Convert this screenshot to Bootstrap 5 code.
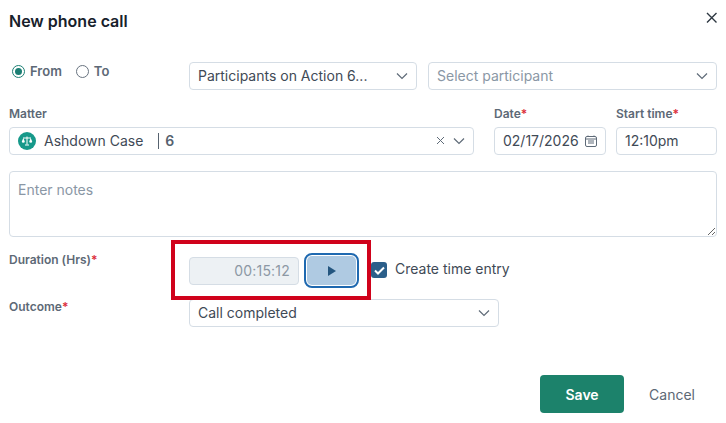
<!DOCTYPE html>
<html lang="en">
<head>
    <meta charset="UTF-8">
    <meta name="viewport" content="width=device-width, initial-scale=1.0">
    <title>New phone call</title>
    <link href="https://cdn.jsdelivr.net/npm/bootstrap@5.3.0/dist/css/bootstrap.min.css" rel="stylesheet">
    <style>
        body {
            font-family: Inter, "Liberation Sans", sans-serif;
            font-size: 14px;
            color: #3f4a56;
            background: #fff;
            overflow: hidden;
        }
        .call-dialog {
            width: 726px;
            height: 423px;
            padding: 12px 9px 10px 9px;
        }
        .call-title {
            font-size: 16px;
            font-weight: 600;
            line-height: 18px;
            color: #17212b;
            margin: 0;
        }
        .close-icon { margin: -1px -2px 0 0; }
        .head-row { height: 50px; }
        .field-label {
            font-size: 12px;
            font-weight: 600;
            line-height: 16px;
            color: #5d6976;
            margin-bottom: 5px;
        }
        .req { color: #dc2f3c; }
        .fake-input {
            height: 28px;
            border: 1px solid #d5dde5;
            border-radius: 4px;
            background: #fff;
            padding: 0 8px 1px;
            display: flex;
            align-items: center;
            font-size: 14px;
            color: #3f4a56;
            white-space: nowrap;
        }
        .placeholder-txt { color: #8a97a5; }
        .direction-col { width: 180px; padding-left: 3px; }
        .radio-mark {
            width: 13px;
            height: 13px;
            border: 1px solid #68737f;
            border-radius: 50%;
            display: inline-block;
            background: #fff;
            flex: none;
        }
        .radio-mark.on { border: 1.5px solid #1c7f74; padding: 2px; background: #1c7f74 content-box; }
        .radio-text { font-size: 13px; font-weight: 600; color: #5d6976; margin-left: 5px; margin-right: 14px; }
        .part-select { width: 228px; margin-right: 11px; }
        .part-pick { width: 289px; }
        .row-top { margin-bottom: 16px; }
        .matter-col { width: 465px; margin-right: 20px; }
        .date-col { width: 112px; margin-right: 10px; }
        .time-col { width: 101px; }
        .matter-badge {
            width: 18px;
            height: 18px;
            border-radius: 50%;
            background: #16998a;
            display: flex;
            align-items: center;
            justify-content: center;
            margin-right: 8px;
            flex: none;
        }
        .matter-sep { border-left: 1px solid #56626f; height: 16px; margin: 0 6px 0 15px; }
        .matter-num { font-weight: 600; color: #56626f; }
        .row-matter { margin-bottom: 16px; }
        .notes-box {
            display: block;
            width: 708px;
            height: 66px;
            border: 1px solid #d5dde5;
            border-radius: 4px;
            padding: 7px 8px;
            font-size: 14px;
            font-family: inherit;
            margin-bottom: 20px;
        }
        .notes-box::placeholder { color: #8a97a5; opacity: 1; }
        .label-col { width: 180px; }
        .duration-row { position: relative; height: 42px; }
        .duration-row .field-label { margin-top: -5px; }
        .timer-box {
            width: 110px;
            background: #edf1f4;
            justify-content: flex-end;
            color: #8c98a4;
            padding-right: 8px;
            letter-spacing: .2px;
        }
        .play-btn {
            width: 55px;
            height: 35px;
            margin: -4px 0 0 5px;
            border: 2px solid #1f69b0;
            border-radius: 8px;
            background: #afcae2 content-box;
            padding: 1px;
            display: flex;
            align-items: center;
            justify-content: center;
        }
        .tick-box {
            width: 16px;
            height: 16px;
            border-radius: 3px;
            background: #2b5f8a;
            margin: 5px 8px 0 12px;
            display: flex;
            align-items: center;
            justify-content: center;
            flex: none;
        }
        .tick-label { margin-top: 3px; line-height: 18px; }
        .red-frame {
            position: absolute;
            left: 162px;
            top: -17px;
            width: 200px;
            height: 60px;
            border: 4px solid #d0021b;
            pointer-events: none;
        }
        .outcome-select { width: 310px; }
        .foot-row { margin-top: 48px; }
        .save-btn {
            width: 84px;
            height: 38px;
            background: #1c826b;
            color: #fff;
            border: 0;
            border-radius: 4px;
            font-size: 14px;
            font-weight: 600;
        }
        .cancel-btn { color: #5c6875; font-size: 14px; margin: 0 22px 0 25px; }
    </style>
</head>
<body>
    <div class="call-dialog">
        <div class="head-row d-flex justify-content-between align-items-start">
            <h5 class="call-title">New phone call</h5>
            <svg class="close-icon" width="14" height="14" viewBox="0 0 14 14" fill="none" stroke="#2d3741" stroke-width="1.4"><path d="M2 2l9.5 9.5M11.5 2L2 11.5"/></svg>
        </div>

        <div class="d-flex row-top">
            <div class="direction-col d-flex align-items-start">
                <span class="d-flex align-items-center"><span class="radio-mark on"></span><span class="radio-text">From</span></span>
                <span class="d-flex align-items-center"><span class="radio-mark"></span><span class="radio-text">To</span></span>
            </div>
            <div class="fake-input part-select justify-content-between">
                <span>Participants on Action 6...</span>
                <svg width="12" height="8" viewBox="0 0 12 8" fill="none" stroke="#5f6b78" stroke-width="1.2"><path d="M1 1.5l5 5 5-5"/></svg>
            </div>
            <div class="fake-input part-pick justify-content-between">
                <span class="placeholder-txt">Select participant</span>
                <svg width="12" height="8" viewBox="0 0 12 8" fill="none" stroke="#5f6b78" stroke-width="1.2"><path d="M1 1.5l5 5 5-5"/></svg>
            </div>
        </div>

        <div class="d-flex row-matter">
            <div class="matter-col">
                <div class="field-label">Matter</div>
                <div class="fake-input">
                    <span class="matter-badge">
                        <svg width="12" height="12" viewBox="0 0 12 12" fill="none" stroke="#fff" stroke-width="1"><path d="M6 1.5v8M4 10h4M2 3h8"/><path d="M.8 6.5L2.3 3l1.5 3.5a1.5 1.2 0 0 1-3 0zM8.2 6.5L9.7 3l1.5 3.5a1.5 1.2 0 0 1-3 0z" fill="#fff" stroke="none"/></svg>
                    </span>
                    <span>Ashdown Case</span>
                    <span class="matter-sep"></span>
                    <span class="matter-num">6</span>
                    <svg class="ms-auto me-2" width="9" height="9" viewBox="0 0 9 9" fill="none" stroke="#5f6b78" stroke-width="1"><path d="M1 1l7 7M8 1L1 8"/></svg>
                    <svg width="12" height="8" viewBox="0 0 12 8" fill="none" stroke="#5f6b78" stroke-width="1.2"><path d="M1 1.5l5 5 5-5"/></svg>
                </div>
            </div>
            <div class="date-col">
                <div class="field-label">Date<span class="req">*</span></div>
                <div class="fake-input justify-content-between">
                    <span>02/17/2026</span>
                    <svg width="12" height="12" viewBox="0 0 12 12" fill="none" stroke="#5f6b78" stroke-width="1"><rect x=".5" y="1.5" width="11" height="10" rx="1.5"/><path d="M.5 4h11M3 6h6M3 8h6M3 .5v1M9 .5v1"/></svg>
                </div>
            </div>
            <div class="time-col">
                <div class="field-label">Start time<span class="req">*</span></div>
                <div class="fake-input">12:10pm</div>
            </div>
        </div>

        <textarea class="notes-box" placeholder="Enter notes"></textarea>

        <div class="d-flex duration-row">
            <div class="label-col"><div class="field-label">Duration (Hrs)<span class="req">*</span></div></div>
            <div class="fake-input timer-box">00:15:12</div>
            <div class="play-btn">
                <svg width="8" height="10" viewBox="0 0 8 10"><path d="M0 0l8 5-8 5z" fill="#24567f"/></svg>
            </div>
            <div class="tick-box">
                <svg width="11" height="9" viewBox="0 0 11 9" fill="none" stroke="#fff" stroke-width="2"><path d="M1 4.5l3 3 6-6"/></svg>
            </div>
            <div class="tick-label">Create time entry</div>
            <div class="red-frame"></div>
        </div>

        <div class="d-flex">
            <div class="label-col"><div class="field-label">Outcome<span class="req">*</span></div></div>
            <div class="fake-input outcome-select justify-content-between">
                <span>Call completed</span>
                <svg width="12" height="8" viewBox="0 0 12 8" fill="none" stroke="#5f6b78" stroke-width="1.2"><path d="M1 1.5l5 5 5-5"/></svg>
            </div>
        </div>

        <div class="d-flex justify-content-end align-items-center foot-row">
            <button class="btn save-btn" type="button">Save</button>
            <span class="cancel-btn">Cancel</span>
        </div>
    </div>

    <script src="https://cdn.jsdelivr.net/npm/bootstrap@5.3.0/dist/js/bootstrap.bundle.min.js"></script>
</body>
</html>
